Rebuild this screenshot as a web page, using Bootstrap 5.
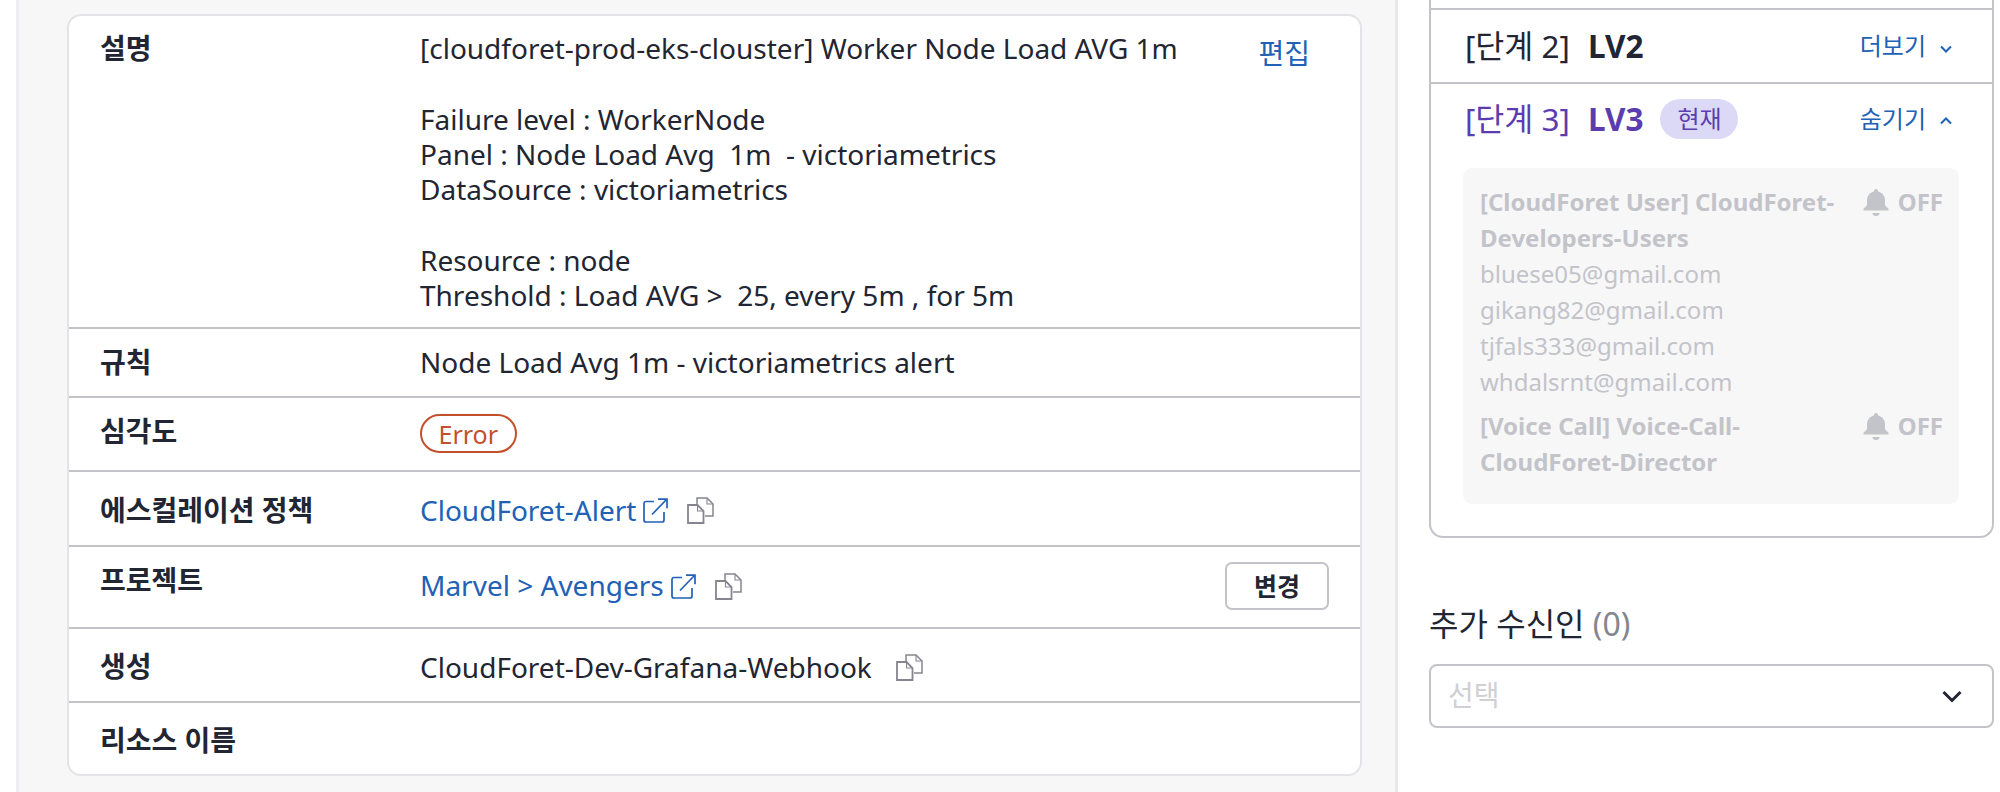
<!DOCTYPE html>
<html lang="ko">
<head>
    <meta charset="UTF-8">
    <title>Alert detail</title>
    <link href="https://cdn.jsdelivr.net/npm/bootstrap@5.3.2/dist/css/bootstrap.min.css" rel="stylesheet">
    <style>
        body {
            height: 792px;
            overflow: hidden;
            background: #fff;
            color: #222532;
            font-family: "Noto Sans", "Noto Sans CJK KR", sans-serif;
            font-size: 28px;
            line-height: 35.3px;
        }
        .page-wrap { height: 792px; }
        .left-pane {
            width: 1382px;
            margin-left: 16px;
            padding: 14px 33px 0 48px;
            background: #f7f7f7;
            border-left: 3px solid #eeeef0;
            border-right: 3px solid #e9e9ec;
            flex: none;
        }
        .right-pane { width: 565px; margin-left: 31px; flex: none; }

        .info-card {
            background: #fff;
            border: 2px solid #e4e4e8;
            border-radius: 14px;
            height: 762px;
        }
        .info-row { border-bottom: 2px solid #c3c3ca; padding: 16px 31px 0 31px; }
        .info-row:last-child { border-bottom: 0; }
        .info-label { width: 320px; flex: none; font-weight: 700; }
        .info-value { white-space: pre-wrap; flex-grow: 1; }
        .row-desc { height: 313px; padding-top: 15px; }
        .row-rule { height: 69px; }
        .row-sev { height: 74px; }
        .row-policy { height: 75px; padding-top: 21px; }
        .row-project { height: 82px; padding-top: 15px; }
        .row-project .info-label { margin-top: 1px; }
        .row-created { height: 74px; padding-top: 21px; }
        .row-created .info-label { margin-top: -1px; }
        .row-res { height: 71px; padding-top: 20px; }
        .project-line { height: 48px; }

        .link-blue, .link-blue:hover { color: #2161b6; text-decoration: none; }
        .edit-link { margin: 5px 19px 0 0; }
        .icon-ext { width: 25px; height: 25px; margin-left: 7px; flex: none; }
        .icon-copy { width: 27px; height: 27px; margin-left: 19px; flex: none; }
        .icon-copy-far { margin-left: 24px; }

        .sev-pill {
            display: inline-block;
            height: 39px;
            line-height: 37px;
            padding: 0 16.5px;
            border: 2px solid #c3502a;
            border-radius: 20px;
            color: #c3502a;
            font-size: 25px;
        }
        .change-btn {
            width: 104px;
            height: 48px;
            padding: 0;
            background: #fff;
            border: 2px solid #c3c3ca;
            border-radius: 7px;
            color: #222532;
            font-size: 25px;
            font-weight: 700;
            line-height: 40px;
        }

        .step-box {
            height: 538px;
            border: 2px solid #c3c3ca;
            border-top: 0;
            border-radius: 0 0 14px 14px;
        }
        .step-stub { height: 10px; border-bottom: 2px solid #c3c3ca; }
        .step-row { height: 74px; padding: 0 39px 0 34px; border-bottom: 2px solid #c3c3ca; }
        .step-open { height: 72px; padding-bottom: 3px; border-bottom: 0; }
        .step-name { font-size: 31.500px; width: 123px; flex: none; white-space: nowrap; }
        .step-lv { font-size: 31.500px; font-weight: 700; }
        .step-current { color: #5b3db0; }
        .now-pill {
            height: 40px;
            width: 78px;
            margin-left: 17px;
            background: #dcd9f6;
            border-radius: 20px;
            font-size: 24px;
            line-height: 40px;
            text-align: center;
        }
        .more-link { font-size: 24px; }
        .icon-chev { width: 14px; height: 14px; margin-left: 13px; }

        .muted-box {
            margin: 12px 33px 0 32px;
            padding: 16px 16px 0 17px;
            height: 336px;
            background: #f7f7f7;
            border-radius: 9px;
            color: #c3c3ca;
            font-size: 24px;
            line-height: 36px;
        }
        .muted-name { font-weight: 700; width: 370px; }
        .muted-off { font-weight: 700; margin-left: auto; flex: none; }
        .icon-bell { width: 28px; height: 28px; margin-right: 8px; }
        .muted-group { margin-bottom: 8px; }

        .extra-title { margin-top: 64px; font-size: 32px; line-height: 44px; }
        .extra-count { color: #85858f; }
        .extra-select {
            height: 64px;
            margin-top: 18px;
            padding: 0 29px 0 17px;
            border: 2px solid #c3c3ca;
            border-radius: 8px;
            color: #cfcfd4;
            font-size: 28px;
        }
        .icon-select { width: 22px; height: 22px; }
    </style>
</head>
<body>
    <svg class="d-none">
        <symbol id="ext" viewBox="0 0 25 25">
            <path d="M11 3.500H3a2 2 0 0 0-2 2V22a2 2 0 0 0 2 2h16a2 2 0 0 0 2-2v-8" fill="none" stroke="currentColor" stroke-width="1.700"/>
            <path d="M9 16.500 23.500 1.500M15 1.200h9v9" fill="none" stroke="currentColor" stroke-width="1.700"/>
        </symbol>
        <symbol id="copy" viewBox="0 0 27 27">
            <path d="M1 8h9.500l6 6v12H1z" fill="none" stroke="#85858f" stroke-width="1.800"/>
            <path d="M10.500 8v6h6" fill="none" stroke="#85858f" stroke-width="1.100"/>
            <path d="M10 7V1h10l6 6v12h-8" fill="none" stroke="#85858f" stroke-width="1.500"/>
            <path d="M20 1v6h6" fill="none" stroke="#85858f" stroke-width="1.100"/>
        </symbol>
        <symbol id="bell" viewBox="0 0 28 28">
            <path d="M14 1a2 2 0 0 1 2 2v.500c4.500 1 7 4.500 7 9v4.500l3.500 4v1.500H1.500V21l3.500-4v-4.500c0-4.500 2.500-8 7-9V3a2 2 0 0 1 2-2zM10.500 25h7a3.500 3 0 0 1-7 0z" fill="currentColor"/>
        </symbol>
    </svg>

    <div class="page-wrap d-flex">
        <div class="left-pane">
            <div class="info-card">
                <div class="info-row row-desc d-flex">
                    <div class="info-label">설명</div>
                    <div class="info-value">[cloudforet-prod-eks-clouster] Worker Node Load AVG 1m

Failure level : WorkerNode
Panel : Node Load Avg  1m  - victoriametrics
DataSource : victoriametrics

Resource : node
Threshold : Load AVG &gt;  25, every 5m , for 5m</div>
                    <a href="#" class="link-blue edit-link">편집</a>
                </div>
                <div class="info-row row-rule d-flex">
                    <div class="info-label">규칙</div>
                    <div class="info-value">Node Load Avg 1m - victoriametrics alert</div>
                </div>
                <div class="info-row row-sev d-flex">
                    <div class="info-label">심각도</div>
                    <div><span class="sev-pill">Error</span></div>
                </div>
                <div class="info-row row-policy d-flex">
                    <div class="info-label">에스컬레이션 정책</div>
                    <div class="d-flex align-items-center align-self-start">
                        <a href="#" class="link-blue">CloudForet-Alert</a>
                        <svg class="icon-ext link-blue"><use href="#ext"/></svg>
                        <svg class="icon-copy"><use href="#copy"/></svg>
                    </div>
                </div>
                <div class="info-row row-project d-flex">
                    <div class="info-label">프로젝트</div>
                    <div class="project-line d-flex align-items-center align-self-start flex-grow-1">
                        <a href="#" class="link-blue">Marvel &gt; Avengers</a>
                        <svg class="icon-ext link-blue"><use href="#ext"/></svg>
                        <svg class="icon-copy"><use href="#copy"/></svg>
                        <button type="button" class="btn change-btn ms-auto">변경</button>
                    </div>
                </div>
                <div class="info-row row-created d-flex">
                    <div class="info-label">생성</div>
                    <div class="d-flex align-items-center align-self-start">
                        <span>CloudForet-Dev-Grafana-Webhook</span>
                        <svg class="icon-copy icon-copy-far"><use href="#copy"/></svg>
                    </div>
                </div>
                <div class="info-row row-res d-flex">
                    <div class="info-label">리소스 이름</div>
                </div>
            </div>
        </div>

        <div class="right-pane">
            <div class="step-box">
                <div class="step-stub"></div>
                <div class="step-row d-flex align-items-center">
                    <span class="step-name">[단계 2]</span>
                    <span class="step-lv">LV2</span>
                    <a href="#" class="link-blue more-link ms-auto">더보기<svg class="icon-chev" viewBox="0 0 14 14"><path d="M2 4.500l5 5 5-5" fill="none" stroke="currentColor" stroke-width="2"/></svg></a>
                </div>
                <div class="step-row step-open d-flex align-items-center">
                    <span class="step-name step-current">[단계 3]</span>
                    <span class="step-lv step-current">LV3</span>
                    <span class="now-pill step-current">현재</span>
                    <a href="#" class="link-blue more-link ms-auto">숨기기<svg class="icon-chev" viewBox="0 0 14 14"><path d="M2 9.500l5-5 5 5" fill="none" stroke="currentColor" stroke-width="2"/></svg></a>
                </div>
                <div class="muted-box">
                    <div class="muted-group">
                        <div class="d-flex">
                            <div class="muted-name">[CloudForet User] CloudForet-Developers-Users</div>
                            <div class="muted-off d-flex align-items-start"><svg class="icon-bell mt-1"><use href="#bell"/></svg>OFF</div>
                        </div>
                        <div>bluese05@gmail.com</div>
                        <div>gikang82@gmail.com</div>
                        <div>tjfals333@gmail.com</div>
                        <div>whdalsrnt@gmail.com</div>
                    </div>
                    <div class="d-flex">
                        <div class="muted-name">[Voice Call] Voice-Call-CloudForet-Director</div>
                        <div class="muted-off d-flex align-items-start"><svg class="icon-bell mt-1"><use href="#bell"/></svg>OFF</div>
                    </div>
                </div>
            </div>
            <div class="extra-title">추가 수신인 <span class="extra-count">(0)</span></div>
            <div class="extra-select d-flex align-items-center justify-content-between">
                <span>선택</span>
                <svg class="icon-select" viewBox="0 0 22 22"><path d="M2.500 7l8.500 8.500L19.500 7" fill="none" stroke="#222532" stroke-width="3"/></svg>
            </div>
        </div>
    </div>

    <script src="https://cdn.jsdelivr.net/npm/bootstrap@5.3.2/dist/js/bootstrap.bundle.min.js"></script>
</body>
</html>
